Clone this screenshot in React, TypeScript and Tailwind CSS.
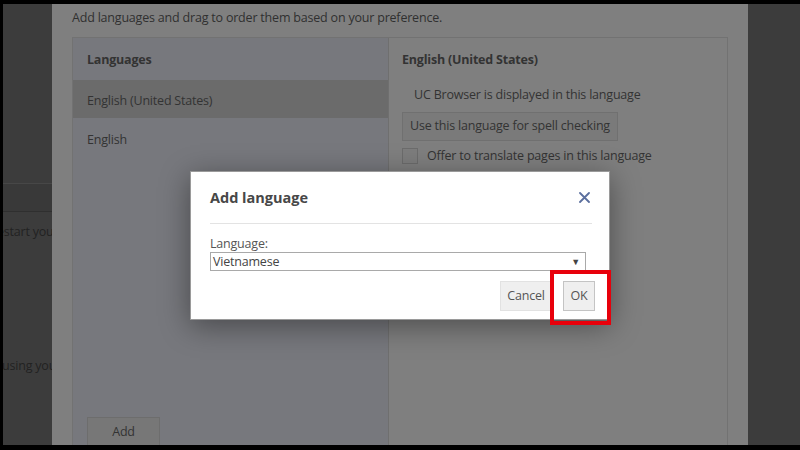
import React from 'react';

function CloseIcon() {
  return (
    <svg width="11" height="11" viewBox="0 0 11 11" fill="none">
      <path d="M1 1 L10 10 M10 1 L1 10" stroke="#5b6f9e" strokeWidth="1.8" strokeLinecap="round" />
    </svg>
  );
}

export default function App() {
  return (
    <div
      className="w-[800px] h-[450px] bg-black flex flex-col overflow-hidden relative text-[12.5px] tracking-[-0.2px] text-[#2e2e2e]"
      style={{ fontFamily: '"Open Sans", "Noto Sans", sans-serif' }}
    >
      <div className="h-[4px] shrink-0" />
      <div className="h-[441px] flex shrink-0">
        <div className="w-[3px] shrink-0" />

        {/* page behind the overlay, left side */}
        <div className="w-[49px] shrink-0 bg-[#3c3c3c] flex flex-col overflow-hidden">
          <div className="h-[179px] shrink-0" />
          <div className="h-px bg-[#474747]" />
          <div className="h-[27px] bg-[#393939]" />
          <div className="h-px bg-[#2f2f2f]" />
          <div className="mt-[10px] whitespace-nowrap -ml-[11px] leading-[20px] text-[#222]">restart your</div>
          <div className="mt-[114px] whitespace-nowrap -ml-[1px] leading-[20px] text-[#222]">using your</div>
        </div>

        {/* settings panel */}
        <div className="w-[696px] shrink-0 bg-[#7f7f7f] flex flex-col px-[20px]">
          <div className="pt-[4px] leading-[20px] text-[#303030]">
            Add languages and drag to order them based on your preference.
          </div>
          <div className="mt-[9px] flex-1 flex border border-b-0 border-[#727272] min-h-0">
            <div className="w-[315px] shrink-0 bg-[#77787d] flex flex-col">
              <div className="h-[42px] flex items-center pt-[2px] px-[14px] font-bold text-[#333]">Languages</div>
              <div className="h-[38px] flex items-center pt-[4px] px-[14px] bg-[#6b6b6b] text-[#333]">English (United States)</div>
              <div className="h-[42px] flex items-center pt-[2px] px-[14px] text-[#333]">English</div>
              <div className="flex-1" />
              <div className="px-[14px]">
                <div className="w-[73px] h-[28px] border border-b-0 border-[#6d6d6d] bg-[#777777] flex items-center justify-center pt-[2px] text-[#333]">
                  Add
                </div>
              </div>
            </div>
            <div className="flex-1 border-l border-[#6f6f6f] bg-[#7f7f7f] px-[13px] flex flex-col">
              <div className="h-[42px] flex items-center pt-[2px] font-bold text-[#333]">English (United States)</div>
              <div className="h-[28px] flex items-center pt-[2px] pl-[12px] text-[#333]">UC Browser is displayed in this language</div>
              <div className="mt-[4px] self-start h-[29px] px-[7px] border border-[#707070] bg-[#7a7a7a] flex items-center text-[#333]">
                Use this language for spell checking
              </div>
              <div className="mt-[6px] flex items-center gap-[9px]">
                <div className="w-[16px] h-[16px] border border-[#6c6c6c] bg-[#7d7d7d]" />
                <span className="text-[#333]">Offer to translate pages in this language</span>
              </div>
            </div>
          </div>
        </div>

        <div className="w-[20px] shrink-0 bg-[#3c3c3c]" />
        <div className="flex-1 bg-[#3c3c3c]" />
      </div>
      <div className="flex-1" />

      {/* Add language dialog */}
      <div className="absolute left-[190px] top-[171px] w-[420px] h-[149px] bg-white border border-[#9a9a9a] shadow-[0_6px_28px_rgba(0,0,0,0.4)] flex flex-col">
        <div className="h-[52px] ml-[19px] mr-[17px] flex items-center justify-between border-b border-[#e3e3e3]">
          <span className="text-[14.5px] font-bold tracking-normal text-[#474747]">Add language</span>
          <span className="mr-[2px]">
            <CloseIcon />
          </span>
        </div>
        <div className="ml-[19px] mt-[12px] leading-[16px] text-[#555]">Language:</div>
        <div className="ml-[19px] w-[376px] h-[19px] border border-[#a9a9a9] flex items-center justify-between px-[2px] text-[#444]">
          <span className="leading-[16px]">Vietnamese</span>
          <span className="text-[9px] text-[#444] mr-[3px]">▼</span>
        </div>
        <div className="mt-[10px] flex justify-end gap-[11px] pr-[14px]">
          <div className="w-[52px] h-[30px] bg-[#efefef] border border-[#e2e2e2] flex items-center justify-center text-[#555]">
            Cancel
          </div>
          <div className="w-[32px] h-[30px] bg-[#efefef] border border-[#c4c4c4] flex items-center justify-center text-[#555]">
            OK
          </div>
        </div>
      </div>

      {/* highlight */}
      <div className="absolute left-[550px] top-[270px] w-[61px] h-[55px] border-[4px] border-[#e8000b]" />
    </div>
  );
}
